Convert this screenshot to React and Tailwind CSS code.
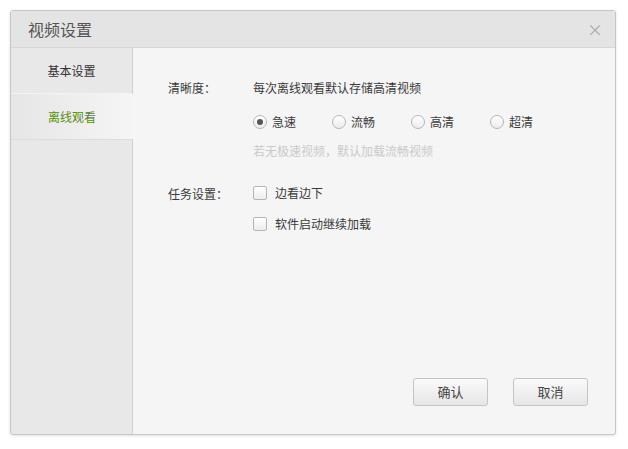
import React, { useState } from 'react';

const font = { fontFamily: '"Noto Sans CJK SC", "Liberation Sans", sans-serif' };

function Radio({ label, checked, onClick }) {
  return (
    <label onClick={onClick} className="flex items-center gap-[5px] w-[79px] cursor-pointer">
      <span className="w-[14px] h-[14px] rounded-full border border-[#b5b5b5] bg-gradient-to-b from-[#ffffff] to-[#ececec] flex items-center justify-center">
        {checked && <span className="w-[6px] h-[6px] rounded-full bg-[#555]" />}
      </span>
      <span className="text-[12px] text-[#3a3a3a]">{label}</span>
    </label>
  );
}

function Checkbox({ label, checked, onClick }) {
  return (
    <label onClick={onClick} className="flex items-center gap-[8px] cursor-pointer">
      <span className="w-[14px] h-[14px] rounded-[2px] border border-[#b5b5b5] bg-gradient-to-b from-[#ffffff] to-[#ececec] flex items-center justify-center text-[10px] text-[#555] leading-none">
        {checked ? '✓' : ''}
      </span>
      <span className="text-[12px] text-[#3a3a3a]">{label}</span>
    </label>
  );
}

export default function App() {
  const [tab, setTab] = useState(1);
  const [quality, setQuality] = useState('急速');
  const [watchDl, setWatchDl] = useState(false);
  const [resume, setResume] = useState(false);

  const tabs = ['基本设置', '离线观看'];

  return (
    <div className="w-[628px] h-[449px] bg-white pt-[10px] pl-[10px]" style={font}>
      <div className="w-[606px] h-[425px] border border-[#c6c6c6] rounded-[3px] shadow-[0_1px_3px_rgba(0,0,0,0.12)] bg-[#f5f5f5] flex flex-col overflow-hidden">
        {/* Header */}
        <div className="h-[37px] shrink-0 bg-[#e4e4e4] border-b border-[#d6d6d6] flex items-center justify-between pl-[17px] pr-[12px]">
          <span className="text-[16px] text-[#555]">视频设置</span>
          <button className="text-[#aaa] text-[16px] leading-none cursor-pointer">×</button>
        </div>

        <div className="flex flex-1">
          {/* Sidebar */}
          <div className="w-[122px] shrink-0 bg-[#e8e8e8] border-r border-[#d0d0d0] flex flex-col">
            {tabs.map((t, i) => (
              <div
                key={t}
                onClick={() => setTab(i)}
                className={
                  i === tab
                    ? 'h-[46px] flex items-center justify-center text-[12px] text-[#5b8a1c] bg-gradient-to-r from-[#e6e6e6] to-[#f5f5f5] border-b border-[#dcdcdc] -mr-px cursor-pointer'
                    : 'h-[46px] flex items-center justify-center text-[12px] text-[#333] border-b border-[#f3f3f3] cursor-pointer'
                }
              >
                {t}
              </div>
            ))}
          </div>

          {/* Content */}
          <div className="flex-1 flex flex-col pl-[35px] pt-[30px] pr-[27px] pb-[28px]">
            <div className="flex">
              <span className="w-[85px] text-[12px] text-[#3a3a3a] leading-[20px]">清晰度：</span>
              <div className="flex flex-col">
                <span className="text-[12px] text-[#3a3a3a] leading-[20px]">每次离线观看默认存储高清视频</span>
                <div className="flex mt-[15px]">
                  {['急速', '流畅', '高清', '超清'].map((q) => (
                    <Radio key={q} label={q} checked={quality === q} onClick={() => setQuality(q)} />
                  ))}
                </div>
                <span className="text-[12px] text-[#cacaca] leading-[20px] mt-[10px]">若无极速视频，默认加载流畅视频</span>
              </div>
            </div>

            <div className="flex mt-[23px]">
              <span className="w-[85px] text-[12px] text-[#3a3a3a] leading-[20px]">任务设置：</span>
              <div className="flex flex-col gap-[13px]">
                <Checkbox label="边看边下" checked={watchDl} onClick={() => setWatchDl(!watchDl)} />
                <Checkbox label="软件启动继续加载" checked={resume} onClick={() => setResume(!resume)} />
              </div>
            </div>

            <div className="mt-auto flex justify-end gap-[25px]">
              <button className="w-[75px] h-[28px] rounded-[3px] border border-[#c4c4c4] bg-gradient-to-b from-[#fafafa] to-[#e6e6e6] text-[13px] text-[#444] cursor-pointer">确认</button>
              <button className="w-[75px] h-[28px] rounded-[3px] border border-[#c4c4c4] bg-gradient-to-b from-[#fafafa] to-[#e6e6e6] text-[13px] text-[#444] cursor-pointer">取消</button>
            </div>
          </div>
        </div>
      </div>
    </div>
  );
}
